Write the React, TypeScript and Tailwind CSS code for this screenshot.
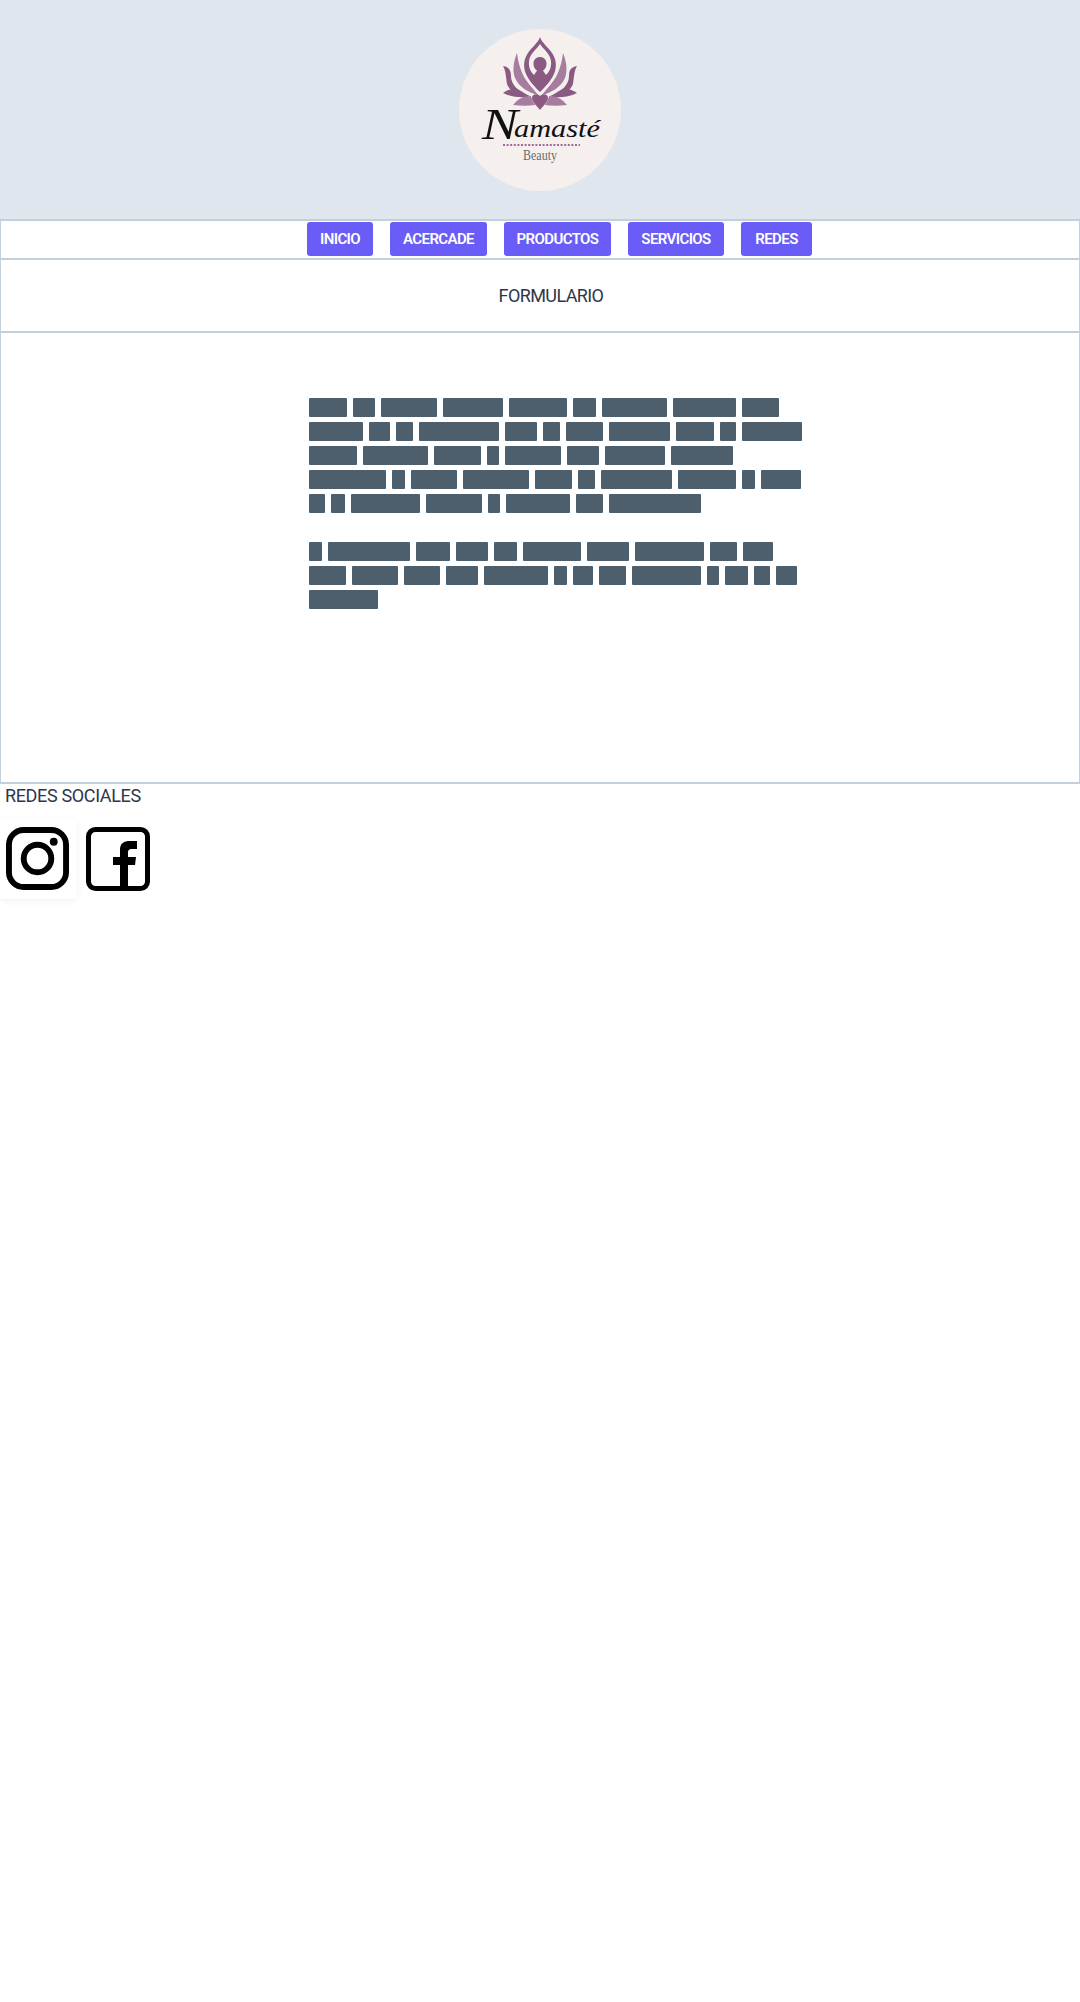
const navItems = [
  { label: "INICIO", width: "w-[66px]" },
  { label: "ACERCADE", width: "w-[97px]" },
  { label: "PRODUCTOS", width: "w-[107px]" },
  { label: "SERVICIOS", width: "w-[96px]" },
  { label: "REDES", width: "w-[71px]" },
];

const paragraphs = [
  [
    [38, 22, 56, 60, 58, 23, 65, 63, 37],
    [54, 21, 17, 80, 32, 17, 37, 61, 38, 16, 60],
    [48, 65, 47, 12, 56, 32, 60, 62],
    [77, 13, 46, 66, 37, 17, 71, 58, 13, 40],
    [16, 14, 69, 56, 12, 64, 27, 92],
  ],
  [
    [13, 82, 34, 32, 23, 58, 42, 69, 27, 30],
    [37, 46, 36, 32, 64, 13, 20, 27, 69, 12, 23, 16, 21],
    [69],
  ],
];

function Logo() {
  const half = (
    <>
      <path
        d="M104 24 C103 33 100 44 95 51 C90 58 85 63 83 66 C92 64 102 58 106 49 C109 41 107 31 104 24 Z"
        fill="#a67c9f"
      />
      <path
        d="M118 37 C112 38 110 41 110 47 C110 55 104 62 91 67 C103 67 111 63 114 55 C115 49 115 42 118 37 Z"
        fill="#8a5a83"
      />
      <path
        d="M118 64 C112 60 107 59 102 61 C98 63 95 65 92 68 C102 69 110 68 118 64 Z"
        fill="#8a5a83"
      />
      <path
        d="M108 76 C103 70 98 67 90 67 C89 71 88 73 86 76 C93 77 100 77 108 76 Z"
        fill="#a67c9f"
      />
    </>
  );

  return (
    <div className="h-[162px] w-[162px] rounded-full bg-[#f5f0ee]">
      <svg viewBox="0 0 162 162" width="162" height="162">
        {half}
        <g transform="matrix(-1 0 0 1 162 0)">{half}</g>
        <path
          fillRule="evenodd"
          fill="#8a5a83"
          d="M81 8 C83 14 89 18 93 24 C98 31 98 40 94 47 C91 53 85 59 81 63 C77 59 71 53 68 47 C64 40 64 31 69 24 C73 18 79 14 81 8 Z M81 15 C78 20 71 24 70 32 C69.5 38 71 42 75 46 C76 44 77.5 43 78 41.5 C75.5 40 74.5 37.5 74.5 34.5 C74.5 30.5 77.5 28 81 28 C84.5 28 87.5 30.5 87.5 34.5 C87.5 37.5 86.5 40 84 41.5 C84.5 43 86 44 87 46 C91 42 92.5 38 92 32 C91 24 84 20 81 15 Z"
        />
        <path
          fill="#8a5a83"
          d="M81 81 C78 77 73 73 73 69 C73 65 78 64 81 67 C84 64 89 65 89 69 C89 73 84 77 81 81 Z"
        />
        <text
          x="23"
          y="110"
          textLength="36"
          lengthAdjust="spacingAndGlyphs"
          fontFamily="'Liberation Serif', serif"
          fontStyle="italic"
          fontSize="44"
          fill="#111111"
        >
          N
        </text>
        <text
          x="55"
          y="108"
          textLength="86"
          lengthAdjust="spacingAndGlyphs"
          fontFamily="'Liberation Serif', serif"
          fontStyle="italic"
          fontSize="25"
          fill="#111111"
        >
          amasté
        </text>
        <line
          x1="44"
          y1="116"
          x2="121"
          y2="116"
          stroke="#a0699a"
          strokeWidth="2"
          strokeDasharray="2 1.6"
        />
        <text
          x="64"
          y="131"
          textLength="34"
          lengthAdjust="spacingAndGlyphs"
          fontFamily="'Liberation Serif', serif"
          fontSize="15"
          fill="#6b6b6b"
        >
          Beauty
        </text>
      </svg>
    </div>
  );
}

function InstagramIcon() {
  return (
    <svg viewBox="0 0 64 64" width="63" height="63" fill="none" stroke="#000" strokeWidth="6">
      <rect x="3" y="3" width="58" height="58" rx="15" />
      <circle cx="32" cy="32" r="14" />
      <circle cx="48.5" cy="15" r="4" fill="#000" stroke="none" />
    </svg>
  );
}

function FacebookIcon() {
  return (
    <svg viewBox="0 0 64 64" width="64" height="64" fill="none">
      <rect x="2.5" y="2.5" width="59" height="59" rx="7" stroke="#000" strokeWidth="5" />
      <path
        d="M34 62 V38 H27 V30 H34 V23 C34 16 38 14 44 14 H51 V22 H46 C43 22 42 23 42 26 V30 H50 L49 38 H42 V62 Z"
        fill="#000"
      />
    </svg>
  );
}

export default function App() {
  return (
    <div className="min-h-[2002px] bg-white font-['Roboto',sans-serif] text-[#2d3748]">
      <header className="flex h-[219px] items-center justify-center bg-[#dfe6ee] pt-px">
        <Logo />
      </header>

      <nav className="flex h-[41px] items-start justify-center gap-[17px] border-x border-y-2 border-[#c3d0dc] pl-[39px] pt-px">
        {navItems.map((item) => (
          <button
            key={item.label}
            className={`${item.width} h-[34px] rounded-[3px] bg-[#6a5cf6] text-[15px] font-semibold tracking-[-0.6px] text-white`}
          >
            {item.label}
          </button>
        ))}
      </nav>

      <div className="flex h-[73px] items-center justify-center border-x border-b-2 border-[#c3d0dc] pl-[22px] text-[18px] tracking-[-0.6px]">
        FORMULARIO
      </div>

      <section className="h-[451px] border-x border-b-2 border-[#c3d0dc] pl-[308px] pt-[65px]">
        <div className="flex flex-col gap-[29px]">
          {paragraphs.map((rows, i) => (
            <div key={i} className="flex flex-col gap-[5px]">
              {rows.map((row, j) => (
                <div key={j} className="flex gap-[6px]">
                  {row.map((width, k) => (
                    <span
                      key={k}
                      className="h-[19px] rounded-[1px] bg-[#4d5e6c]"
                      style={{ width }}
                    />
                  ))}
                </div>
              ))}
            </div>
          ))}
        </div>
      </section>

      <p className="pl-[5px] text-[18px] leading-[24px] tracking-[-0.35px]">REDES SOCIALES</p>

      <div className="mt-[11px] flex items-start">
        <a className="w-[77px] rounded-[3px] pb-[9px] pl-[6px] pt-[8px] shadow-[0_2px_6px_rgba(0,0,0,0.06)]">
          <InstagramIcon />
        </a>
        <a className="ml-[9px] pt-[8px]">
          <FacebookIcon />
        </a>
      </div>
    </div>
  );
}
